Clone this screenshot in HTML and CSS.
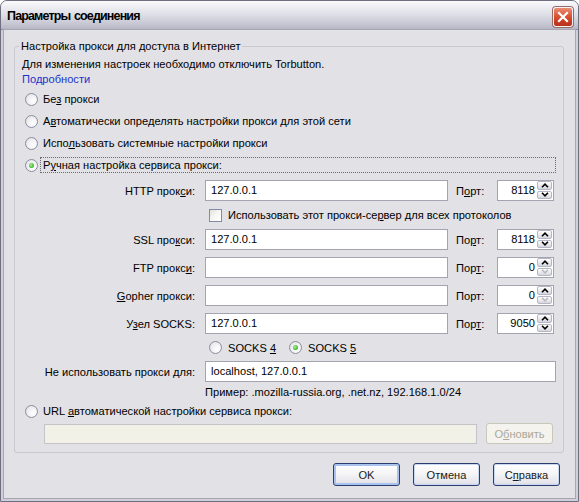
FILE: index.html
```html
<!DOCTYPE html>
<html lang="ru">
<head>
<meta charset="utf-8">
<title>Параметры соединения</title>
<link rel="stylesheet" href="styles.css">
</head>
<body>
<div class="window">
  <div class="titlebar">
    <span class="title">Параметры соединения</span>
    <span class="close"><svg viewBox="0 0 18 18" width="18" height="18"><path d="M5 5 L13 13 M13 5 L5 13" stroke="#fff" stroke-width="2.2" stroke-linecap="square"/></svg></span>
  </div>
  <div class="frame">
    <div class="client">
      <fieldset class="group">
        <legend>Настройка прокси для доступа в Интернет</legend>
        <div class="line">Для изменения настроек необходимо отключить Torbutton.</div>
        <div class="line link">Подробности</div>
        <div class="radio-row first"><span class="radio"></span><span class="rlabel">Бе<u>з</u> прокси</span></div>
        <div class="radio-row"><span class="radio"></span><span class="rlabel">А<u>в</u>томатически определять настройки прокси для этой сети</span></div>
        <div class="radio-row"><span class="radio"></span><span class="rlabel">Испо<u>л</u>ьзовать системные настройки прокси</span></div>
        <div class="radio-row"><span class="radio checked"></span><span class="rlabel focus">Р<u>у</u>чная настройка сервиса прокси:</span></div>

        <div class="grid">
          <div class="flabel">HTTP прок<u>с</u>и:</div>
          <div class="input">127.0.0.1</div>
          <div class="plabel">П<u>о</u>рт:</div>
          <div class="port"><span class="val">8118</span><span class="spin"><span class="sb"><svg viewBox="0 0 8 5" width="8" height="5"><path d="M1 4.2 L4 1.2 L7 4.2" stroke="#000" stroke-width="1.6" fill="none"/></svg></span><span class="sb"><svg viewBox="0 0 8 5" width="8" height="5"><path d="M1 0.8 L4 3.8 L7 0.8" stroke="#000" stroke-width="1.6" fill="none"/></svg></span></span></div>

          <div class="cbrow"><span class="check"></span><span>Использовать этот прокси-се<u>р</u>вер для всех протоколов</span></div>

          <div class="flabel">SSL про<u>к</u>си:</div>
          <div class="input">127.0.0.1</div>
          <div class="plabel">По<u>р</u>т:</div>
          <div class="port"><span class="val">8118</span><span class="spin"><span class="sb"><svg viewBox="0 0 8 5" width="8" height="5"><path d="M1 4.2 L4 1.2 L7 4.2" stroke="#000" stroke-width="1.6" fill="none"/></svg></span><span class="sb"><svg viewBox="0 0 8 5" width="8" height="5"><path d="M1 0.8 L4 3.8 L7 0.8" stroke="#000" stroke-width="1.6" fill="none"/></svg></span></span></div>

          <div class="flabel">FTP прокс<u>и</u>:</div>
          <div class="input"></div>
          <div class="plabel">Пор<u>т</u>:</div>
          <div class="port"><span class="val">0</span><span class="spin"><span class="sb"><svg viewBox="0 0 8 5" width="8" height="5"><path d="M1 4.2 L4 1.2 L7 4.2" stroke="#000" stroke-width="1.6" fill="none"/></svg></span><span class="sb"><svg viewBox="0 0 8 5" width="8" height="5"><path d="M1 0.8 L4 3.8 L7 0.8" stroke="#b8b8c0" stroke-width="1.6" fill="none"/></svg></span></span></div>

          <div class="flabel"><u>G</u>opher прокси:</div>
          <div class="input"></div>
          <div class="plabel">Порт:</div>
          <div class="port"><span class="val">0</span><span class="spin"><span class="sb"><svg viewBox="0 0 8 5" width="8" height="5"><path d="M1 4.2 L4 1.2 L7 4.2" stroke="#000" stroke-width="1.6" fill="none"/></svg></span><span class="sb"><svg viewBox="0 0 8 5" width="8" height="5"><path d="M1 0.8 L4 3.8 L7 0.8" stroke="#b8b8c0" stroke-width="1.6" fill="none"/></svg></span></span></div>

          <div class="flabel">У<u>з</u>ел SOCKS:</div>
          <div class="input">127.0.0.1</div>
          <div class="plabel">Пор<u>т</u>:</div>
          <div class="port"><span class="val">9050</span><span class="spin"><span class="sb"><svg viewBox="0 0 8 5" width="8" height="5"><path d="M1 4.2 L4 1.2 L7 4.2" stroke="#000" stroke-width="1.6" fill="none"/></svg></span><span class="sb"><svg viewBox="0 0 8 5" width="8" height="5"><path d="M1 0.8 L4 3.8 L7 0.8" stroke="#000" stroke-width="1.6" fill="none"/></svg></span></span></div>

          <div class="socks">
            <span class="radio"></span><span class="slabel">SOCKS <u>4</u></span>
            <span class="radio checked s5"></span><span class="slabel">SOCKS <u>5</u></span>
          </div>

          <div class="flabel">Не использовать прокси <u>д</u>ля:</div>
          <div class="input wide">localhost, 127.0.0.1</div>
        </div>
        <div class="example">Пример: .mozilla-russia.org, .net.nz, 192.168.1.0/24</div>
        <div class="radio-row"><span class="radio"></span><span class="rlabel">URL <u>а</u>втоматической настройки сервиса прокси:</span></div>
        <div class="urlrow">
          <div class="input disabled"></div>
          <div class="btn disabled-btn">О<u>б</u>новить</div>
        </div>
      </fieldset>
      <div class="buttons">
        <div class="btn main default">OK</div>
        <div class="btn main">Отмена</div>
        <div class="btn main">С<u>п</u>равка</div>
      </div>
    </div>
  </div>
</div>
</body>
</html>
```
FILE: styles.css
```css
html, body {
  margin: 0;
  padding: 0;
  background: #ffffff;
}
body {
  font-family: "Liberation Sans", Arial, sans-serif;
  font-size: 11.1px;
  color: #000;
}
u {
  text-decoration: underline;
  text-underline-offset: 1px;
}
.window {
  width: 579px;
  height: 502px;
  box-sizing: border-box;
  border: 1px solid #6e6e80;
  border-radius: 7px 7px 0 0;
  overflow: hidden;
  display: flex;
  flex-direction: column;
  background: #cfcfd9;
}
.titlebar {
  height: 29px;
  flex: none;
  display: flex;
  align-items: center;
  justify-content: space-between;
  padding: 0 4px 0 6px;
  background: linear-gradient(to bottom, #fbfbfd 0%, #eeeef3 20%, #dcdce5 50%, #c6c6d3 80%, #b2b2c2 100%);
  box-shadow: inset 0 -1px 0 #8e8e9e;
}
.title {
  font-family: "Liberation Sans", Arial, sans-serif;
  font-weight: bold;
  font-size: 12.5px;
  letter-spacing: -0.85px;
  word-spacing: 1px;
  color: #000;
  padding-top: 1px;
}
.close {
  width: 20px;
  height: 20px;
  box-sizing: border-box;
  border: 1px solid #f2f2f6;
  border-radius: 3px;
  background: linear-gradient(to bottom, #e98c74 0%, #dc5a3c 40%, #c73a22 75%, #b83420 100%);
  box-shadow: 0 0 0 1px #9a6a66;
  display: flex;
  align-items: center;
  justify-content: center;
  margin-top: 2px;
  margin-right: 1px;
}
.close svg { display: block; }
.frame {
  flex: 1;
  padding: 0 3px 3px;
  display: flex;
}
.client {
  flex: 1;
  background: #e2e1e6;
  box-shadow: 0 0 0 1px #a6a6b4;
  padding: 0 11px 0 10px;
  display: flex;
  flex-direction: column;
}
.group {
  margin: 10px 0 0 0;
  width: 550px;
  box-sizing: border-box;
  border: 1px solid #c8c8ce;
  border-radius: 3px;
  padding: 4px 7px 8px 7px;
  min-width: 0;
}
.group legend {
  padding: 0 2px;
  margin-left: -3px;
  line-height: 13px;
  color: #000;
}
.line {
  height: 15px;
  line-height: 15px;
  white-space: nowrap;
}
.link { color: #1a32c8; }
.radio-row {
  height: 22px;
  display: flex;
  align-items: center;
  padding-left: 3px;
}
.radio-row.first { margin-top: 1px; }
.radio {
  width: 13px;
  height: 13px;
  box-sizing: border-box;
  border-radius: 50%;
  border: 1px solid #8c8ea0;
  background: radial-gradient(circle at 65% 65%, #ffffff 0%, #f4f4f6 40%, #dcdce2 100%);
  flex: none;
  position: relative;
}
.radio.checked::after {
  content: "";
  position: absolute;
  left: 3px;
  top: 3px;
  width: 5px;
  height: 5px;
  border-radius: 50%;
  background: radial-gradient(circle at 40% 40%, #b4f09a 0%, #4cc238 55%, #21a121 100%);
}
.rlabel {
  margin-left: 2px;
  padding: 0 2px;
  border: 1px dotted transparent;
  line-height: 14px;
  white-space: nowrap;
}
.rlabel.focus {
  flex: 1;
  border-color: #6a6a70;
}
.grid {
  margin-top: 4px;
  display: grid;
  grid-template-columns: 183px 251px 41px 57px;
  grid-auto-rows: auto;
  row-gap: 7px;
  align-items: center;
}
.flabel {
  text-align: right;
  padding-right: 10px;
  white-space: nowrap;
}
.plabel {
  white-space: nowrap;
}
.input {
  height: 21px;
  width: 243px;
  box-sizing: border-box;
  border: 1px solid #a2a5b0;
  background: #fff;
  padding-left: 5px;
  line-height: 19px;
  white-space: nowrap;
}
.input.wide {
  grid-column: 2 / 5;
  width: calc(100% + 2px);
}
.port {
  height: 21px;
  width: 57px;
  box-sizing: border-box;
  border: 1px solid #a2a5b0;
  background: #fff;
  display: flex;
  align-items: stretch;
}
.val {
  flex: 1;
  text-align: right;
  line-height: 19px;
  padding-right: 2px;
}
.spin {
  width: 15px;
  display: flex;
  flex-direction: column;
  padding: 0 1px 1px 0;
  gap: 1px;
}
.sb {
  flex: 1;
  box-sizing: border-box;
  border: 1px solid #b4b6c4;
  border-radius: 2px;
  background: linear-gradient(to bottom, #ffffff, #e6e6ec 60%, #d6d6de);
  display: flex;
  align-items: center;
  justify-content: center;
}
.sb svg { display: block; }
.cbrow {
  grid-column: 2 / 5;
  display: flex;
  align-items: center;
  height: 14px;
  padding-left: 4px;
  white-space: nowrap;
}
.check {
  width: 13px;
  height: 13px;
  box-sizing: border-box;
  border: 1px solid #7f8ba8;
  background: linear-gradient(135deg, #e2e0d6 0%, #f6f6f2 45%, #ffffff 100%);
  margin-right: 6px;
  flex: none;
}
.socks {
  grid-column: 2 / 5;
  display: flex;
  align-items: center;
  height: 13px;
  padding-left: 4px;
}
.slabel {
  margin-left: 6px;
  white-space: nowrap;
}
.radio.s5 { margin-left: 13px; }
.example {
  margin-top: 2px;
  height: 16px;
  line-height: 16px;
  padding-left: 183px;
  white-space: nowrap;
}
.urlrow {
  margin-top: 1px;
  display: flex;
  align-items: flex-end;
  padding-left: 22px;
  gap: 9px;
}
.input.disabled {
  width: 433px;
  height: 20px;
  background: #f2f1e8;
  border-color: #c4c4c8;
}
.btn {
  box-sizing: border-box;
  display: flex;
  align-items: center;
  justify-content: center;
  border-radius: 3px;
  white-space: nowrap;
  color: #1a1a1a;
}
.disabled-btn {
  width: 67px;
  height: 21px;
  border: 1px solid #c9c7ba;
  background: #f4f3ee;
  color: #aca899;
}
.buttons {
  margin-top: 10px;
  margin-right: 4px;
  display: flex;
  justify-content: flex-end;
  gap: 13px;
}
.btn.main {
  width: 67px;
  height: 23px;
  border: 1px solid #2c3d6e;
  background: linear-gradient(to bottom, #ffffff 0%, #f4f4f6 50%, #e4e4ea 90%, #d4d4dc 100%);
  box-shadow: inset 0 0 0 1px #c8d8f4;
}
.btn.main.default {
  box-shadow: inset 0 0 0 2px #a8c4ee;
}
```
